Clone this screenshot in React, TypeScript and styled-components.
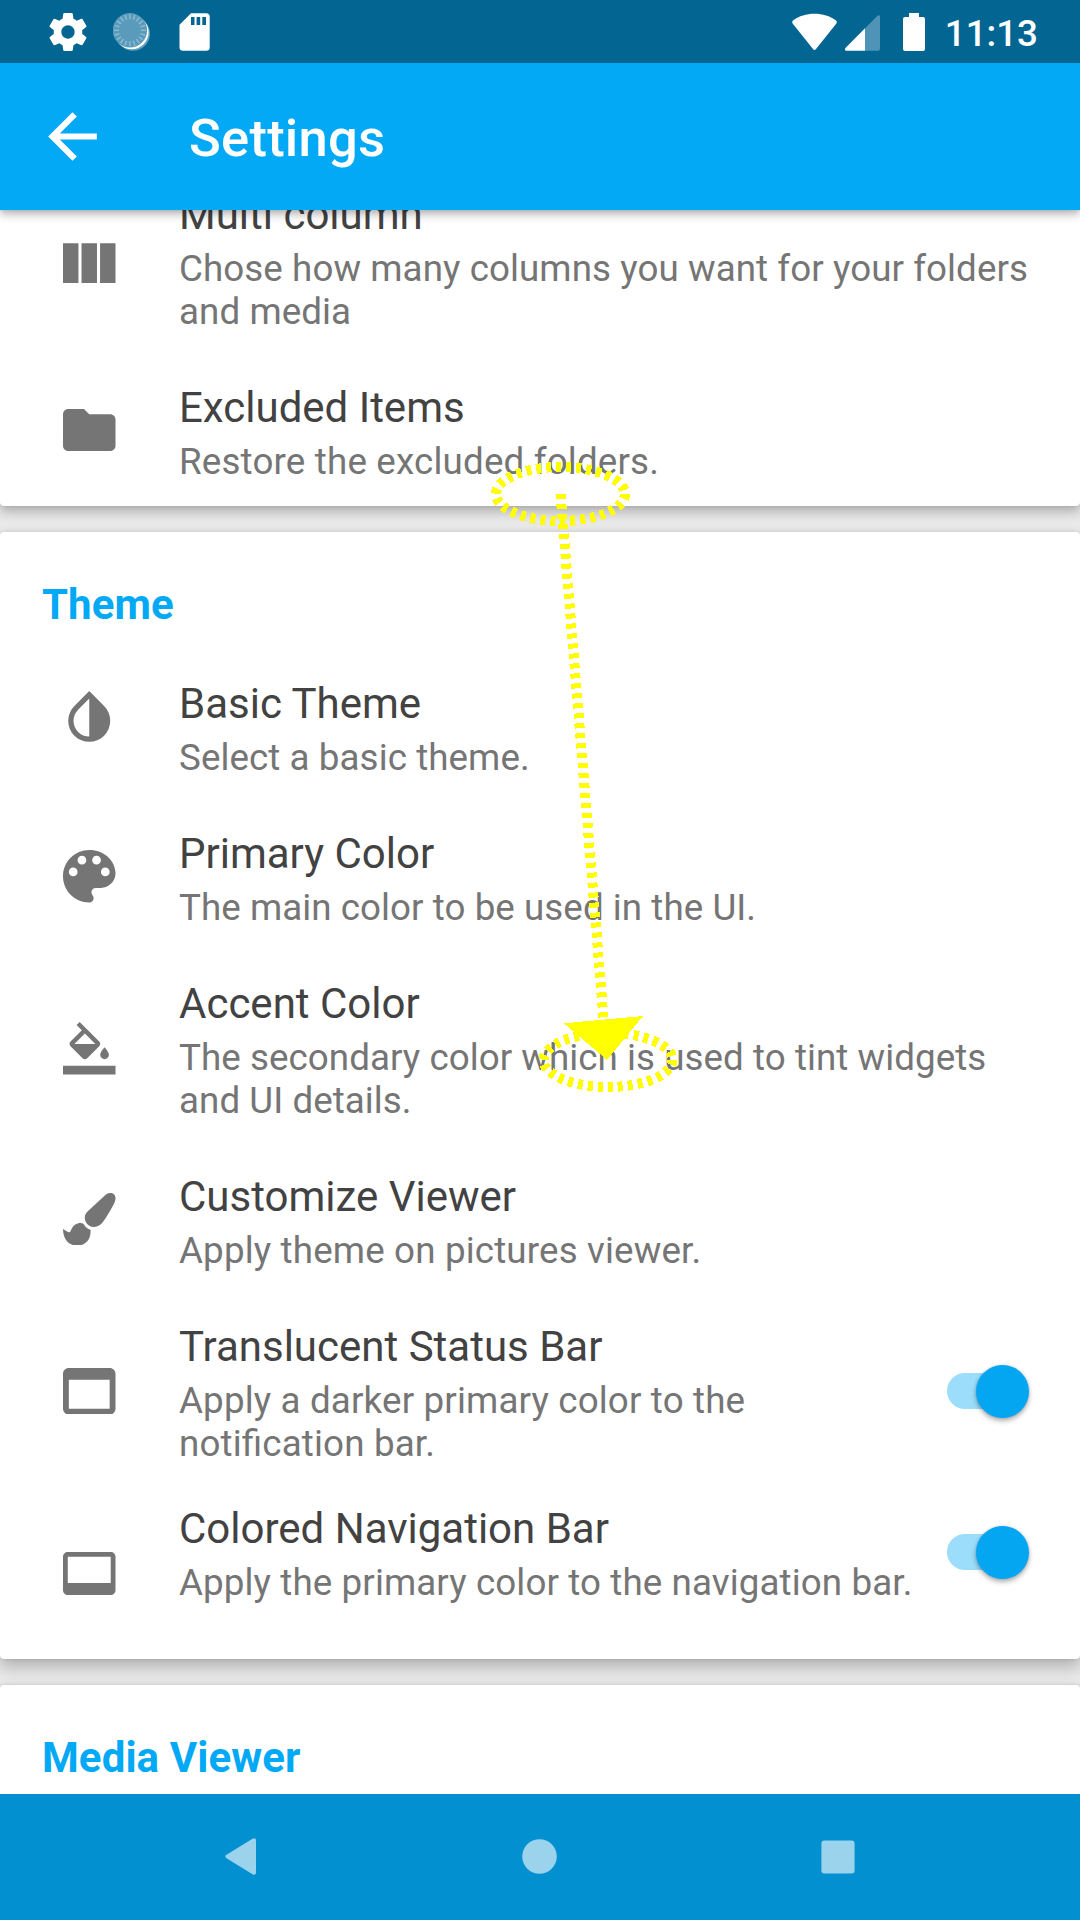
import React from "react";
import styled, { createGlobalStyle } from "styled-components";

const GlobalStyle = createGlobalStyle`
  *, *::before, *::after { box-sizing: border-box; }
  body { margin: 0; background: #e9e9e9; }
`;

const Screen = styled.div`
  position: relative;
  display: flex;
  flex-direction: column;
  width: 1080px;
  height: 1920px;
  overflow: hidden;
  background: #e9e9e9;
  font-family: Roboto, "Liberation Sans", sans-serif;
`;

const StatusBar = styled.header`
  display: flex;
  flex: none;
  justify-content: space-between;
  height: 63px;
  padding: 0 42px 0 49px;
  background: #026592;
  color: #fff;
  z-index: 2;
`;

const StatusGroup = styled.div<{ $gap: number }>`
  display: flex;
  align-items: center;
  gap: ${(p) => p.$gap}px;
`;

const Clock = styled.span`
  margin-left: 20px;
  padding-top: 3px;
  font-size: 36.75px;
  font-weight: 500;
  line-height: 43px;
`;

const BatterySlot = styled.div`
  display: flex;
  margin-left: 23px;
`;

const AppBar = styled.nav`
  display: flex;
  flex: none;
  align-items: center;
  height: 147px;
  padding-left: 36px;
  background: #03a9f4;
  color: #fff;
  z-index: 1;
  box-shadow: 0 4px 9px rgba(0, 0, 0, 0.3), 0 0 4px rgba(0, 0, 0, 0.1);
`;

const Heading = styled.h1`
  margin: 0 0 0 80px;
  padding-top: 3px;
  font-size: 52.5px;
  font-weight: 500;
  line-height: 62px;
  letter-spacing: 0.25px;
`;

const Content = styled.main`
  display: flex;
  flex: 1;
  flex-direction: column;
  gap: 26px;
  min-height: 0;
  overflow: hidden;
`;

const Card = styled.section<{ $scrolled?: number; $depth: number }>`
  flex: none;
  margin-top: ${(p) => -(p.$scrolled ?? 0)}px;
  border-radius: 4px;
  background: #fff;
  box-shadow: 0 ${(p) => p.$depth}px ${(p) => p.$depth * 2}px rgba(0, 0, 0, 0.24),
    0 0 4px rgba(0, 0, 0, 0.12);
`;

const SectionTitle = styled.h2`
  margin: 0;
  padding: 48px 42px 23px;
  color: #03a9f4;
  font-size: 42px;
  font-weight: 700;
  line-height: 49px;
  letter-spacing: 0.1px;
`;

const Row = styled.div<{ $bottom: number }>`
  display: flex;
  align-items: flex-start;
  padding: 27px 42px ${(p) => p.$bottom}px 63px;
`;

const IconSlot = styled.div<{ $top: number }>`
  display: flex;
  flex: none;
  width: 116px;
  padding-top: ${(p) => p.$top}px;
  color: #757575;
`;

const Labels = styled.div`
  display: flex;
  flex: 1;
  flex-direction: column;
  gap: 8px;
`;

const Title = styled.div`
  color: #424242;
  font-size: 42px;
  line-height: 49px;
`;

const Summary = styled.div<{ $tracking: number }>`
  color: #757575;
  font-size: 36.75px;
  line-height: 43px;
  letter-spacing: ${(p) => p.$tracking}px;
  font-feature-settings: "liga" 1;
`;

const Track = styled.div<{ $top: number }>`
  display: flex;
  flex: none;
  align-items: center;
  justify-content: flex-end;
  width: 73px;
  height: 36px;
  margin: ${(p) => p.$top}px 18px 0 14px;
  border-radius: 18px;
  background: #9bddfb;
`;

const Thumb = styled.div`
  flex: none;
  width: 53px;
  height: 53px;
  margin-right: -9px;
  border-radius: 50%;
  background: #05a6f1;
  box-shadow: 0 3px 5px rgba(0, 0, 0, 0.3), 0 0 3px rgba(0, 0, 0, 0.15);
`;

const NavBar = styled.footer`
  display: flex;
  flex: none;
  align-items: center;
  justify-content: space-between;
  height: 126px;
  padding: 0 225px 1px 225px;
  background: #0390d0;
  color: #9bd3ec;
  z-index: 1;
`;

const Gesture = styled.svg`
  position: absolute;
  top: 0;
  left: 0;
  z-index: 3;
  pointer-events: none;
`;

type Glyph = { box: string; w: number; h: number; d: string };

const glyphs: Record<string, Glyph> = {
  columns: {
    box: "4 5 17 13", w: 52.5, h: 40.5,
    d: "M10 18h5V5h-5v13zm-6 0h5V5H4v13zM16 5v13h5V5h-5z",
  },
  folder: {
    box: "2 4 20 16", w: 52.5, h: 42,
    d: "M10 4H4c-1.1 0-1.99.9-1.99 2L2 18c0 1.1.9 2 2 2h16c1.1 0 2-.9 2-2V8c0-1.1-.9-2-2-2h-8l-2-2z",
  },
  invert: {
    box: "2 2.1 20 19.5", w: 52.5, h: 52.5,
    d: "M17.66 7.93L12 2.27 6.34 7.93c-3.12 3.12-3.12 8.19 0 11.31C7.9 20.8 9.95 21.58 12 21.58s4.1-.78 5.66-2.34c3.12-3.12 3.12-8.19 0-11.31zM12 19.59c-1.6 0-3.11-.62-4.24-1.76C6.62 16.69 6 15.19 6 13.59s.62-3.11 1.76-4.24L12 5.1v14.49z",
  },
  palette: {
    box: "3 3 18 18", w: 52.5, h: 52.5,
    d: "M12 3c-4.97 0-9 4.03-9 9s4.03 9 9 9c.83 0 1.5-.67 1.5-1.5 0-.39-.15-.74-.39-1.01-.23-.26-.38-.61-.38-.99 0-.83.67-1.5 1.5-1.5H16c2.76 0 5-2.24 5-5 0-4.42-4.03-8-9-8zm-5.5 9c-.83 0-1.5-.67-1.5-1.5S5.67 9 6.5 9 8 9.67 8 10.5 7.33 12 6.5 12zm3-4C8.67 8 8 7.33 8 6.5S8.67 5 9.5 5s1.5.67 1.5 1.5S10.33 8 9.5 8zm5 0c-.83 0-1.5-.67-1.5-1.5S13.67 5 14.5 5s1.5.67 1.5 1.5S15.33 8 14.5 8zm3 4c-.83 0-1.5-.67-1.5-1.5S16.67 9 17.5 9s1.5.67 1.5 1.5-.67 1.5-1.5 1.5z",
  },
  fill: {
    box: "0 0 24 24", w: 52.5, h: 52.5,
    d: "M16.56 8.94L7.62 0 6.21 1.41l2.38 2.38-5.15 5.15c-.59.59-.59 1.54 0 2.12l5.5 5.5c.29.29.68.44 1.06.44s.77-.15 1.06-.44l5.5-5.5c.59-.58.59-1.53 0-2.12zM5.21 10L10 5.21 14.79 10H5.21zM19 11.5s-2 2.17-2 3.5c0 1.1.9 2 2 2s2-.9 2-2c0-1.33-2-3.5-2-3.5zM0 20h24v4H0v-4z",
  },
  brush: {
    box: "0 0 53 53", w: 52.5, h: 52.5,
    d: "M47.6 0C50.6 0 53 2 53 5c0 2.2-.8 4.5-1.8 6.4C45.500 22 42 27.600 39 30.800 36.800 33.200 34 34.300 31 34.300c-5 0-9-4.200-9-9.200 0-2.600 1-5 3-6.700L42.800 2.100C44 .9 45.800 0 47.600 0zM20.800 31.200c1.700 3 4.100 5.100 7 5.800v2c0 8.500-5.500 14-13.800 14C4.500 53 0 45.500 0 36.200c1.100.8 4.700 3.500 5.800 3.500.9 0 1.600-.5 1.900-1.300C10 32.400 13.800 30.400 17.800 30.400c1 0 2 .3 3 .8z",
  },
  statusBar: {
    box: "3 4 18 16", w: 52.5, h: 46.7,
    d: "M19 4H5c-1.11 0-2 .9-2 2v12c0 1.1.89 2 2 2h14c1.1 0 2-.9 2-2V6c0-1.1-.89-2-2-2zm0 14H5V8h14v10z",
  },
  navBar: {
    box: "1 3 22 18", w: 52.5, h: 43,
    d: "M21 3H3c-1.11 0-2 .89-2 2v14c0 1.1.89 2 2 2h18c1.1 0 2-.9 2-2V5c0-1.11-.9-2-2-2zm0 13H3V5h18v11z",
  },
  back: {
    box: "0 0 24 24", w: 73, h: 73,
    d: "M20 11H7.830l5.590-5.590L12 4l-8 8 8 8 1.410-1.410L7.830 13H20v-2z",
  },
  gear: {
    box: "2.2 2 19.6 20", w: 38, h: 38,
    d: "M19.430 12.980c.04-.32.07-.64.07-.98s-.03-.66-.07-.98l2.110-1.650c.19-.15.24-.42.12-.64l-2-3.460c-.12-.22-.39-.3-.61-.22l-2.490 1c-.52-.4-1.080-.73-1.690-.98l-.38-2.650C14.460 2.180 14.250 2 14 2h-4c-.25 0-.46.18-.49.42l-.38 2.650c-.61.25-1.170.59-1.690.98l-2.490-1c-.23-.09-.49 0-.61.22l-2 3.460c-.13.22-.07.49.12.64l2.110 1.650c-.04.32-.07.65-.07.98s.03.66.07.98l-2.110 1.650c-.19.15-.24.42-.12.64l2 3.460c.12.22.39.3.61.22l2.490-1c.52.4 1.080.73 1.690.98l.38 2.650c.03.24.24.42.49.42h4c.25 0 .46-.18.49-.42l.38-2.650c.61-.25 1.170-.59 1.690-.98l2.490 1c.23.09.49 0 .61-.22l2-3.460c.12-.22.07-.49-.12-.64l-2.110-1.650zM12 15.500c-1.930 0-3.500-1.570-3.500-3.500s1.570-3.500 3.500-3.500 3.500 1.570 3.500 3.500-1.570 3.500-3.500 3.500z",
  },
};

function Icon({ name }: { name: string }) {
  const g = glyphs[name];
  return (
    <svg width={g.w} height={g.h} viewBox={g.box} fill="currentColor">
      <path d={g.d} />
    </svg>
  );
}

function Spinner() {
  const ticks = Array.from({ length: 20 }, (_, i) => i * 18);
  return (
    <svg width="40" height="38" viewBox="0 0 40 38">
      <circle cx="20" cy="20.8" r="17" fill="#5d9fbd" />
      <circle cx="18.600" cy="19.200" r="17" fill="#fff" />
      <circle cx="16.900" cy="17.300" r="17.200" fill="#5a9abb" />
      {ticks.map((a) => (
        <path
          key={a}
          d="M16.900 1.300v5"
          stroke="#8dbcd1"
          strokeWidth="1.400"
          transform={`rotate(${a} 16.900 17.300)`}
        />
      ))}
    </svg>
  );
}

function SdCard() {
  return (
    <svg width="31" height="38" viewBox="0 0 31 38" fill="#fff">
      <path
        fillRule="evenodd"
        d="M12 .3h15.200a3.500 3.500 0 0 1 3.500 3.500v30.400a3.500 3.500 0 0 1-3.500 3.500H4a3.500 3.500 0 0 1-3.500-3.500V11.800zM12 4v8h3.500V4zm5.600 0v8h3.600V4zm5.700 0v8H27V4z"
      />
    </svg>
  );
}

function Wifi() {
  return (
    <svg width="45" height="38" viewBox="0 0 45 38" fill="#fff">
      <path d="M.8 10.700C-.2 9.300 0 8.300 1.400 7.200 7 3 14.300.8 22.500.8S38 3 43.600 7.200c1.400 1.100 1.600 2.100.6 3.500L24 36c-1 1.200-2 1.200-3 0z" />
    </svg>
  );
}

function Signal() {
  return (
    <svg width="35" height="38" viewBox="0 0 35 38">
      <path d="M20 15.200 32.500 2.700C33.700 1.700 35 2.200 35 4v31.700a2 2 0 0 1-2 2H20z" fill="#4f94b6" />
      <path d="M20 15.200v22.500H1.500C-.2 37.700-.5 36 .7 34.700z" fill="#fff" />
    </svg>
  );
}

function Battery() {
  return (
    <svg width="22" height="38" viewBox="0 0 22 38" fill="#fff">
      <path d="M6 0h10v4h4a2 2 0 0 1 2 2v30a2 2 0 0 1-2 2H2a2 2 0 0 1-2-2V6a2 2 0 0 1 2-2h4z" />
    </svg>
  );
}

type Item = {
  icon: string;
  iconTop: number;
  title: string;
  summary: string;
  tracking: number;
  switchTop?: number;
  bottom?: number;
};

const general: Item[] = [
  { icon: "columns", iconTop: 52.5, title: "Multi column", summary: "Chose how many columns you want for your folders and media", tracking: 0.07 },
  { icon: "folder", iconTop: 26, title: "Excluded Items", summary: "Restore the excluded folders.", tracking: 0.17 },
];

const theme: Item[] = [
  { icon: "invert", iconTop: 11, title: "Basic Theme", summary: "Select a basic theme.", tracking: 0.07 },
  { icon: "palette", iconTop: 21, title: "Primary Color", summary: "The main color to be used in the UI.", tracking: 0.05 },
  { icon: "fill", iconTop: 43, title: "Accent Color", summary: "The secondary color which is used to tint widgets and UI details.", tracking: 0.05 },
  { icon: "brush", iconTop: 20.5, title: "Customize Viewer", summary: "Apply theme on pictures viewer.", tracking: 0.15 },
  { icon: "statusBar", iconTop: 45.5, title: "Translucent Status Bar", summary: "Apply a darker primary color to the notification bar.", tracking: 0.15, switchTop: 51, bottom: 12 },
  { icon: "navBar", iconTop: 47.5, title: "Colored Navigation Bar", summary: "Apply the primary color to the navigation bar.", tracking: 0.105, switchTop: 30, bottom: 55 },
];

function Setting({ item }: { item: Item }) {
  return (
    <Row $bottom={item.bottom ?? 23}>
      <IconSlot $top={item.iconTop}>
        <Icon name={item.icon} />
      </IconSlot>
      <Labels>
        <Title>{item.title}</Title>
        <Summary $tracking={item.tracking}>{item.summary}</Summary>
      </Labels>
      {item.switchTop !== undefined && (
        <Track $top={item.switchTop} role="switch" aria-checked="true">
          <Thumb />
        </Track>
      )}
    </Row>
  );
}

export default function App() {
  return (
    <>
      <GlobalStyle />
      <Screen>
        <StatusBar>
          <StatusGroup $gap={26}>
            <Icon name="gear" />
            <Spinner />
            <SdCard />
          </StatusGroup>
          <StatusGroup $gap={0}>
            <StatusGroup $gap={8}>
              <Wifi />
              <Signal />
            </StatusGroup>
            <BatterySlot>
              <Battery />
            </BatterySlot>
            <Clock>11:13</Clock>
          </StatusGroup>
        </StatusBar>
        <AppBar>
          <Icon name="back" />
          <Heading>Settings</Heading>
        </AppBar>
        <Content>
          <Card $scrolled={47} $depth={6}>
            {general.map((item) => (
              <Setting key={item.title} item={item} />
            ))}
          </Card>
          <Card $depth={8}>
            <SectionTitle>Theme</SectionTitle>
            {theme.map((item) => (
              <Setting key={item.title} item={item} />
            ))}
          </Card>
          <Card $depth={8}>
            <SectionTitle>Media Viewer</SectionTitle>
          </Card>
        </Content>
        <NavBar>
          <svg width="32" height="37" viewBox="0 0 32 37" fill="currentColor">
            <path d="M1.500 16.800 27.500.8c2-1.200 3.500-.5 3.500 1.600v32.200c0 2.100-1.500 2.800-3.500 1.600l-26-16c-1.700-1.100-1.700-2.300 0-3.400z" />
          </svg>
          <svg width="35" height="35" viewBox="0 0 35 35" fill="currentColor">
            <circle cx="17.500" cy="17.500" r="17.300" />
          </svg>
          <svg width="34" height="34" viewBox="0 0 34 34" fill="currentColor">
            <rect x=".4" y=".4" width="33.200" height="33.200" rx="3" />
          </svg>
        </NavBar>
        <Gesture width="1080" height="1920" viewBox="0 0 1080 1920" shapeRendering="crispEdges">
          <g fill="none" stroke="#ff0" strokeWidth="10" strokeDasharray="5 5">
            <ellipse cx="560.500" cy="494" rx="64.500" ry="27" />
            <ellipse cx="608" cy="1060" rx="64.500" ry="27" />
            <path d="M560.500 494 603.500 1018" />
          </g>
          <path d="M564 1023.300 643 1016 607 1060z" fill="#ff0" />
        </Gesture>
      </Screen>
    </>
  );
}
